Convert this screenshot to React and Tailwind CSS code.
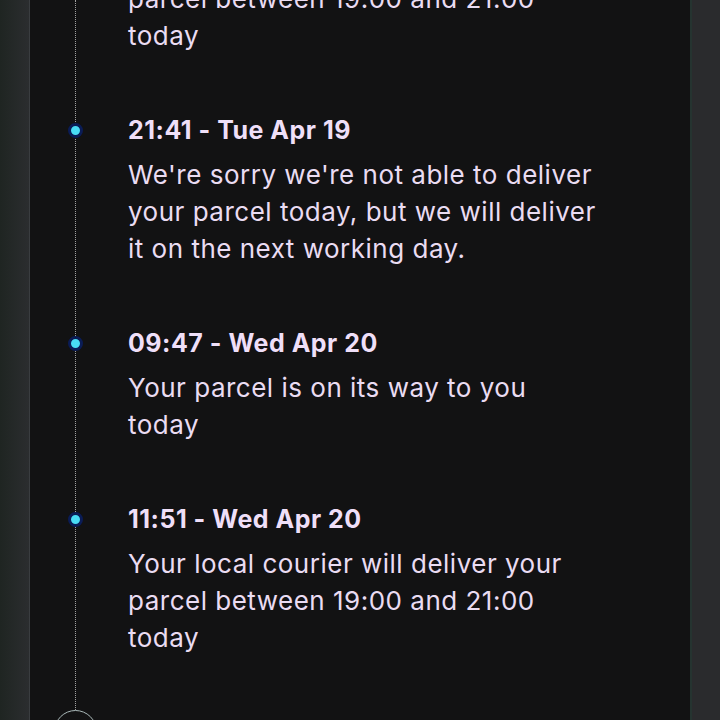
import React from "react";

const items = [
  { t: "16:02 - Tue Apr 19", lines: ["Your local courier will deliver your", "parcel between 19:00 and 21:00", "today"] },
  { t: "21:41 - Tue Apr 19", lines: ["We're sorry we're not able to deliver", "your parcel today, but we will deliver", "it on the next working day."] },
  { t: "09:47 - Wed Apr 20", lines: ["Your parcel is on its way to you", "today"] },
  { t: "11:51 - Wed Apr 20", lines: ["Your local courier will deliver your", "parcel between 19:00 and 21:00", "today"] },
];

export default function App() {
  return (
    <div className="w-[720px] h-[720px] overflow-hidden flex bg-[#121213]" style={{ fontFamily: "Inter, 'Noto Sans', sans-serif" }}>
      <div className="w-[30px] shrink-0 bg-gradient-to-r from-[#1f2522] to-[#2b2d2f] border-r border-[#3a3d40]" />
      <div className="flex-1 bg-[#121213] relative">
        <div className="absolute left-[45px] top-0 bottom-0 border-l border-dotted border-[#a0a0a0]" />
        <div className="mt-[-101.5px] flex flex-col gap-[58px] relative">
          {items.map((it, i) => (
            <div key={i} className="relative pl-[98px]">
              <div className="absolute left-[38px] top-[11px] w-[15px] h-[15px] rounded-full bg-[#48dcf5] border-[3px] border-[#0a1c56]" />
              <div className="h-[37px] leading-[37px] text-[25px] tracking-[0.5px] font-bold text-[#efdff8] mb-[7px]">{it.t}</div>
              <div className="text-[26px] tracking-[0.5px] leading-[37px] text-[#eadcf2]">
                {it.lines.map((l, j) => (
                  <div key={j} className="whitespace-nowrap">{l}</div>
                ))}
              </div>
            </div>
          ))}
          <div className="relative h-[44px]">
            <div className="absolute left-[24px] top-[-4px] w-[43px] h-[43px] rounded-full border-[1.5px] border-[#a9b8b8] bg-[#121213]" />
          </div>
        </div>
      </div>
      <div className="w-[30px] shrink-0 bg-[#2a2b2d] border-l-2 border-[#253430]" />
    </div>
  );
}
